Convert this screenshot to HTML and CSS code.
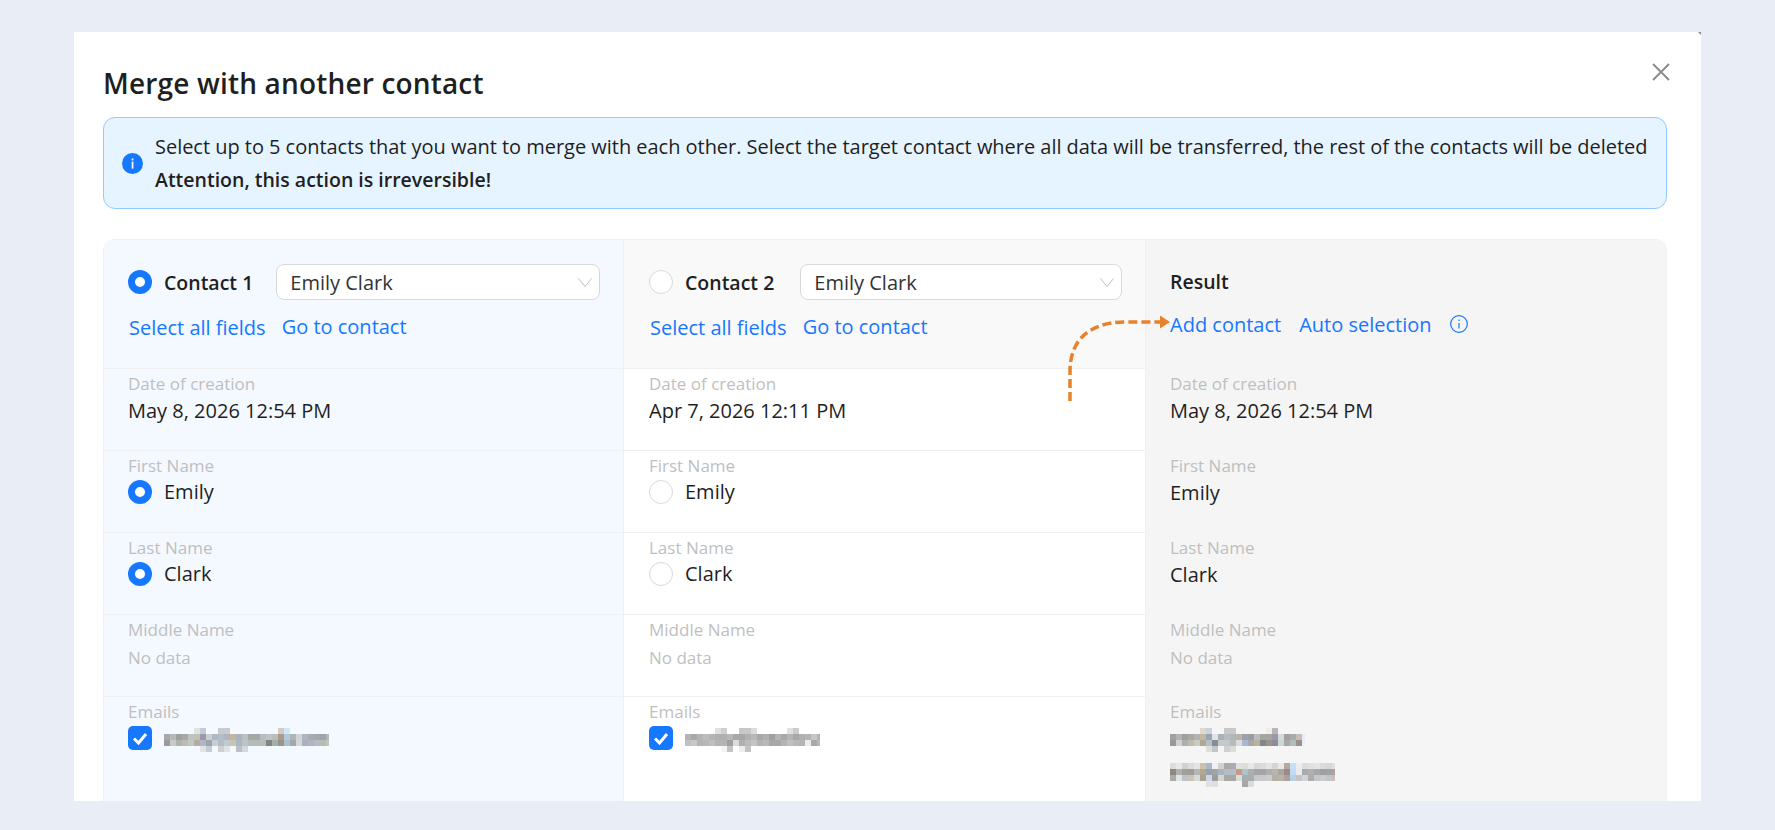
FILE: index.html
```html
<!DOCTYPE html>
<html lang="en">
<head>
<meta charset="utf-8">
<title>Merge with another contact</title>
<link rel="stylesheet" href="styles.css">
</head>
<body>
<div class="modal">
  <span class="notch"></span>
  <svg class="close" viewBox="0 0 18 18" width="18" height="18"><path d="M1 1 17 17M17 1 1 17"/></svg>
  <h1 class="title">Merge with another contact</h1>
  <div class="alert">
    <svg class="alert-icon" viewBox="0 0 21 21" width="21" height="21"><circle cx="10.5" cy="10.5" r="10.5"/><rect class="w" x="9.7" y="5.5" width="1.7" height="1.9"/><rect class="w" x="9.7" y="8.6" width="1.7" height="7"/></svg>
    <div class="alert-text">
      <div class="alert-line">Select up to 5 contacts that you want to merge with each other. Select the target contact where all data will be transferred, the rest of the contacts will be deleted</div>
      <div class="strong">Attention, this action is irreversible!</div>
    </div>
  </div>
  <div class="table">
    <section class="col col-one">
      <header class="head">
        <div class="head-top">
          <span class="radio on"></span><span class="contact-name">Contact 1</span>
          <span class="select"><span>Emily Clark</span><svg class="chev" viewBox="0 0 14 9" width="14" height="9"><path d="M.5.5 7 8.5 13.500.5"/></svg></span>
        </div>
        <div class="links"><a>Select all fields</a><a class="up">Go to contact</a></div>
      </header>
      <div class="row"><div class="label">Date of creation</div><div class="value">May 8, 2026 12:54 PM</div></div>
      <div class="row"><div class="label">First Name</div><div class="value pick"><span class="radio on"></span>Emily</div></div>
      <div class="row"><div class="label">Last Name</div><div class="value pick"><span class="radio on"></span>Clark</div></div>
      <div class="row"><div class="label">Middle Name</div><div class="value none">No data</div></div>
      <div class="row last"><div class="label">Emails</div><div class="value pick">
        <svg class="check" viewBox="0 0 24 24" width="24" height="24"><rect width="24" height="24" rx="5"/><path d="M6 12.500 10.500 17 18 8"/></svg>
        <svg class="px" viewBox="0 0 27.500 4" width="165" height="24">
          <rect x="5" y="0" fill="#dfe3e1"/><rect x="6" y="0" fill="#c3c9d6"/><rect x="9" y="0" fill="#c8ccd0"/><rect x="10" y="0" fill="#c8ccd0"/><rect x="19" y="0" fill="#d4ccc4"/><rect x="20" y="0" fill="#cfe8f5"/>
          <rect x="0" y="1" fill="#a8a8a8"/><rect x="1" y="1" fill="#b8b8b8"/><rect x="2" y="1" fill="#a0a0a0"/><rect x="3" y="1" fill="#a8a8a8"/><rect x="4" y="1" fill="#bcc4c4"/><rect x="5" y="1" fill="#c4c0b4"/><rect x="6" y="1" fill="#9a9aa8"/><rect x="7" y="1" fill="#c8d0d0"/><rect x="8" y="1" fill="#b0b8c4"/><rect x="9" y="1" fill="#b4bcc8"/><rect x="10" y="1" fill="#b0b4c4"/><rect x="11" y="1" fill="#c4b4a4"/><rect x="12" y="1" fill="#a8b4bc"/><rect x="13" y="1" fill="#b8c0c4"/><rect x="14" y="1" fill="#a4a8a4"/><rect x="15" y="1" fill="#a4a8a4"/><rect x="16" y="1" fill="#b4bcc4"/><rect x="17" y="1" fill="#bcc4c4"/><rect x="18" y="1" fill="#bcbcb8"/><rect x="19" y="1" fill="#a89c90"/><rect x="20" y="1" fill="#b4c8d8"/><rect x="21" y="1" fill="#b0b4b4"/><rect x="22" y="1" fill="#ccd4d8"/><rect x="23" y="1" fill="#b0b4bc"/><rect x="24" y="1" fill="#a8acb0"/><rect x="25" y="1" fill="#a4a8a8"/><rect x="26" y="1" fill="#9ca4ac"/><rect x="27" y="1" fill="#b4b8bc"/>
          <rect x="0" y="2" fill="#989c9c"/><rect x="1" y="2" fill="#c4ccc8"/><rect x="2" y="2" fill="#acb4b0"/><rect x="3" y="2" fill="#bcbcb0"/><rect x="4" y="2" fill="#c0c8c0"/><rect x="5" y="2" fill="#b4aca4"/><rect x="6" y="2" fill="#b0b8c4"/><rect x="7" y="2" fill="#a0a4b0"/><rect x="8" y="2" fill="#c8ccd4"/><rect x="9" y="2" fill="#b4bcc8"/><rect x="10" y="2" fill="#c0c8d0"/><rect x="11" y="2" fill="#c8c4b4"/><rect x="12" y="2" fill="#a8b8c4"/><rect x="13" y="2" fill="#bcc4c4"/><rect x="14" y="2" fill="#b4bcb8"/><rect x="15" y="2" fill="#b4bcb8"/><rect x="16" y="2" fill="#b8bcb8"/><rect x="17" y="2" fill="#808484"/><rect x="18" y="2" fill="#a4b0ac"/><rect x="19" y="2" fill="#9c9484"/><rect x="20" y="2" fill="#a8c0d0"/><rect x="21" y="2" fill="#a0a8b0"/><rect x="22" y="2" fill="#d0d8d8"/><rect x="23" y="2" fill="#acb0bc"/><rect x="24" y="2" fill="#b0b4c0"/><rect x="25" y="2" fill="#b4bcc4"/><rect x="26" y="2" fill="#b8bcb8"/><rect x="27" y="2" fill="#c4c4b8"/>
          <rect x="6" y="3" fill="#e0e4e4"/><rect x="7" y="3" fill="#c4ccd4"/><rect x="9" y="3" fill="#ccd0d4"/><rect x="10" y="3" fill="#dce4e4"/><rect x="12" y="3" fill="#bcc0c4"/><rect x="13" y="3" fill="#d4d8d8"/>
        </svg>
      </div></div>
    </section>
    <section class="col col-two">
      <header class="head">
        <div class="head-top">
          <span class="radio"></span><span class="contact-name">Contact 2</span>
          <span class="select"><span>Emily Clark</span><svg class="chev" viewBox="0 0 14 9" width="14" height="9"><path d="M.5.5 7 8.5 13.500.5"/></svg></span>
        </div>
        <div class="links"><a>Select all fields</a><a class="up">Go to contact</a></div>
      </header>
      <div class="row"><div class="label">Date of creation</div><div class="value">Apr 7, 2026 12:11 PM</div></div>
      <div class="row"><div class="label">First Name</div><div class="value pick"><span class="radio"></span>Emily</div></div>
      <div class="row"><div class="label">Last Name</div><div class="value pick"><span class="radio"></span>Clark</div></div>
      <div class="row"><div class="label">Middle Name</div><div class="value none">No data</div></div>
      <div class="row last"><div class="label">Emails</div><div class="value pick">
        <svg class="check" viewBox="0 0 24 24" width="24" height="24"><rect width="24" height="24" rx="5"/><path d="M6 12.500 10.500 17 18 8"/></svg>
        <svg class="px" viewBox="0 0 22.500 4" width="135" height="24">
          <rect x="5" y="0" fill="#e0e0e0"/><rect x="6" y="0" fill="#cfcfcf"/><rect x="9" y="0" fill="#c8c8c8"/><rect x="10" y="0" fill="#c8c8c8"/><rect x="11" y="0" fill="#dcdcdc"/><rect x="17" y="0" fill="#e0e0e0"/><rect x="18" y="0" fill="#cccccc"/>
          <rect x="0" y="1" fill="#b4b4b4"/><rect x="1" y="1" fill="#a8a8a8"/><rect x="2" y="1" fill="#b4b4b4"/><rect x="3" y="1" fill="#bcbcbc"/><rect x="4" y="1" fill="#b4b4b4"/><rect x="5" y="1" fill="#b0b0b0"/><rect x="6" y="1" fill="#b0b0b0"/><rect x="7" y="1" fill="#b8b8b8"/><rect x="8" y="1" fill="#a8a8a8"/><rect x="9" y="1" fill="#a8a8a8"/><rect x="10" y="1" fill="#b0b0b0"/><rect x="11" y="1" fill="#b8b8b8"/><rect x="12" y="1" fill="#a8a8a8"/><rect x="13" y="1" fill="#b0b0b0"/><rect x="14" y="1" fill="#a0a0a0"/><rect x="15" y="1" fill="#b4b4b4"/><rect x="16" y="1" fill="#a8a8a8"/><rect x="17" y="1" fill="#b4b4b4"/><rect x="18" y="1" fill="#a8a8a8"/><rect x="19" y="1" fill="#b0b0b0"/><rect x="20" y="1" fill="#b4b4b4"/><rect x="21" y="1" fill="#c8c8c8"/><rect x="22" y="1" fill="#b4b4b4"/>
          <rect x="0" y="2" fill="#c0c0c0"/><rect x="1" y="2" fill="#c8c8c8"/><rect x="2" y="2" fill="#b4b4b4"/><rect x="3" y="2" fill="#b8b8b8"/><rect x="4" y="2" fill="#c0c0c0"/><rect x="5" y="2" fill="#b4b4b4"/><rect x="6" y="2" fill="#b4b4b4"/><rect x="7" y="2" fill="#a0a0a0"/><rect x="8" y="2" fill="#dcdcdc"/><rect x="9" y="2" fill="#b0b0b0"/><rect x="10" y="2" fill="#bcbcbc"/><rect x="11" y="2" fill="#c4c4c4"/><rect x="12" y="2" fill="#b4b4b4"/><rect x="13" y="2" fill="#b8b8b8"/><rect x="14" y="2" fill="#a8a8a8"/><rect x="15" y="2" fill="#a8a8a8"/><rect x="16" y="2" fill="#b4b4b4"/><rect x="17" y="2" fill="#c0c0c0"/><rect x="18" y="2" fill="#b8b8b8"/><rect x="19" y="2" fill="#b4b4b4"/><rect x="20" y="2" fill="#ececec"/><rect x="21" y="2" fill="#a8a8a8"/><rect x="22" y="2" fill="#b8b8b8"/>
          <rect x="6" y="3" fill="#f4f4f4"/><rect x="7" y="3" fill="#c4c4c4"/><rect x="9" y="3" fill="#eeeeee"/><rect x="10" y="3" fill="#c4c4c4"/>
        </svg>
      </div></div>
    </section>
    <section class="col col-result">
      <header class="head">
        <div class="result-title">Result</div>
        <div class="links result-links"><a>Add contact</a><a>Auto selection</a><svg class="hint" viewBox="0 0 18 18" width="18" height="18"><circle cx="9" cy="9" r="8.300"/><path d="M9 8v5.500M9 4.500v1.500"/></svg></div>
      </header>
      <div class="row"><div class="label">Date of creation</div><div class="value">May 8, 2026 12:54 PM</div></div>
      <div class="row"><div class="label">First Name</div><div class="value">Emily</div></div>
      <div class="row"><div class="label">Last Name</div><div class="value">Clark</div></div>
      <div class="row"><div class="label">Middle Name</div><div class="value none">No data</div></div>
      <div class="row last"><div class="label">Emails</div>
        <svg class="px stack" viewBox="0 0 22.500 4" width="135" height="24">
          <rect x="5" y="0" fill="#e0d8cc"/><rect x="6" y="0" fill="#c8d4e0"/><rect x="9" y="0" fill="#c8c8c8"/><rect x="10" y="0" fill="#c8c8c8"/><rect x="16" y="0" fill="#f0ecec"/><rect x="17" y="0" fill="#b8b4bc"/>
          <rect x="0" y="1" fill="#a4a09c"/><rect x="1" y="1" fill="#b0b4b8"/><rect x="2" y="1" fill="#a0a09c"/><rect x="3" y="1" fill="#a8a8a4"/><rect x="4" y="1" fill="#b0b4b4"/><rect x="5" y="1" fill="#c4b8a4"/><rect x="6" y="1" fill="#98a4b0"/><rect x="7" y="1" fill="#e0e4e8"/><rect x="8" y="1" fill="#a8b0b8"/><rect x="9" y="1" fill="#b8bcc0"/><rect x="10" y="1" fill="#b0b8bc"/><rect x="11" y="1" fill="#bcb4a8"/><rect x="12" y="1" fill="#a0a0b0"/><rect x="13" y="1" fill="#989ca4"/><rect x="14" y="1" fill="#b8bcbc"/><rect x="15" y="1" fill="#a8a4a0"/><rect x="16" y="1" fill="#a8a4a0"/><rect x="17" y="1" fill="#9c98a8"/><rect x="18" y="1" fill="#d4d8dc"/><rect x="19" y="1" fill="#a4a09c"/><rect x="20" y="1" fill="#a4acac"/><rect x="21" y="1" fill="#c8bcb4"/><rect x="22" y="1" fill="#e8ecf0"/>
          <rect x="0" y="2" fill="#989898"/><rect x="1" y="2" fill="#d0d2d2"/><rect x="2" y="2" fill="#acb0b4"/><rect x="3" y="2" fill="#c0bcac"/><rect x="4" y="2" fill="#c4ccc4"/><rect x="5" y="2" fill="#b0a890"/><rect x="6" y="2" fill="#b4c0cc"/><rect x="7" y="2" fill="#888c94"/><rect x="8" y="2" fill="#c8c8c8"/><rect x="9" y="2" fill="#c4c8c8"/><rect x="10" y="2" fill="#b4bcc0"/><rect x="11" y="2" fill="#dcdcdc"/><rect x="12" y="2" fill="#a8b8d0"/><rect x="13" y="2" fill="#a8a8a8"/><rect x="14" y="2" fill="#bcb0a0"/><rect x="15" y="2" fill="#808888"/><rect x="16" y="2" fill="#989490"/><rect x="17" y="2" fill="#8c8c9c"/><rect x="18" y="2" fill="#ccd8d8"/><rect x="19" y="2" fill="#a8a8a8"/><rect x="20" y="2" fill="#b4bcb8"/><rect x="21" y="2" fill="#989090"/><rect x="22" y="2" fill="#ecf0f4"/>
          <rect x="6" y="3" fill="#e0dcd8"/><rect x="7" y="3" fill="#c0c8cc"/><rect x="9" y="3" fill="#d0d0d0"/><rect x="10" y="3" fill="#dcdcd8"/>
        </svg>
        <svg class="px stack second" viewBox="0 0 27.500 4" width="165" height="24">
          <rect x="0" y="0" fill="#e0dcd8"/><rect x="1" y="0" fill="#e8e8e8"/><rect x="2" y="0" fill="#d4d0cc"/><rect x="3" y="0" fill="#dcdcdc"/><rect x="4" y="0" fill="#e4e4e4"/><rect x="5" y="0" fill="#d0c0a8"/><rect x="6" y="0" fill="#a8b8c8"/><rect x="7" y="0" fill="#f0f0f0"/><rect x="8" y="0" fill="#d4d0cc"/><rect x="9" y="0" fill="#aca8a4"/><rect x="10" y="0" fill="#a8acb4"/><rect x="11" y="0" fill="#e0e0e0"/><rect x="12" y="0" fill="#dcdcd8"/><rect x="13" y="0" fill="#e8e8e8"/><rect x="14" y="0" fill="#d8d8d8"/><rect x="15" y="0" fill="#dcdcdc"/><rect x="16" y="0" fill="#e4e4e8"/><rect x="17" y="0" fill="#d8d4d0"/><rect x="18" y="0" fill="#ece8e8"/><rect x="19" y="0" fill="#b8a8a0"/><rect x="20" y="0" fill="#c4e0f4"/><rect x="21" y="0" fill="#f0ecec"/><rect x="22" y="0" fill="#dcdcdc"/><rect x="23" y="0" fill="#e4e0dc"/><rect x="24" y="0" fill="#e4e4e8"/><rect x="25" y="0" fill="#dcdcd8"/><rect x="26" y="0" fill="#d8d8d8"/><rect x="27" y="0" fill="#dce0e4"/>
          <rect x="0" y="1" fill="#8c8884"/><rect x="1" y="1" fill="#b0b0b0"/><rect x="2" y="1" fill="#a0a09c"/><rect x="3" y="1" fill="#a09c98"/><rect x="4" y="1" fill="#b4b8b4"/><rect x="5" y="1" fill="#b0a890"/><rect x="6" y="1" fill="#98a0ac"/><rect x="7" y="1" fill="#a0a4a8"/><rect x="8" y="1" fill="#a8b4c0"/><rect x="9" y="1" fill="#b4bcc4"/><rect x="10" y="1" fill="#b4bcc4"/><rect x="11" y="1" fill="#c49c84"/><rect x="12" y="1" fill="#b0c0cc"/><rect x="13" y="1" fill="#acb0b0"/><rect x="14" y="1" fill="#a4a4ac"/><rect x="15" y="1" fill="#a4a4a8"/><rect x="16" y="1" fill="#b0b0b0"/><rect x="17" y="1" fill="#b8b4ac"/><rect x="18" y="1" fill="#a8a89c"/><rect x="19" y="1" fill="#a08888"/><rect x="20" y="1" fill="#c0dcf4"/><rect x="21" y="1" fill="#eceae8"/><rect x="22" y="1" fill="#a8a8b8"/><rect x="23" y="1" fill="#b0b0b0"/><rect x="24" y="1" fill="#a8a8a8"/><rect x="25" y="1" fill="#a0a0a0"/><rect x="26" y="1" fill="#a0a4a8"/><rect x="27" y="1" fill="#b0a0a0"/>
          <rect x="0" y="2" fill="#acaaa6"/><rect x="1" y="2" fill="#e0e4e4"/><rect x="2" y="2" fill="#bcc4c8"/><rect x="3" y="2" fill="#ccc4b8"/><rect x="4" y="2" fill="#d4dcd4"/><rect x="5" y="2" fill="#a8a090"/><rect x="6" y="2" fill="#ccd8e4"/><rect x="7" y="2" fill="#9c9c9c"/><rect x="8" y="2" fill="#d8d4d0"/><rect x="9" y="2" fill="#a8a8a4"/><rect x="10" y="2" fill="#a8a8a8"/><rect x="11" y="2" fill="#dcdcdc"/><rect x="12" y="2" fill="#a8acac"/><rect x="13" y="2" fill="#a8acac"/><rect x="14" y="2" fill="#c8c8c8"/><rect x="15" y="2" fill="#c8c8c8"/><rect x="16" y="2" fill="#cccccc"/><rect x="17" y="2" fill="#b0b0ac"/><rect x="18" y="2" fill="#b4b4a8"/><rect x="19" y="2" fill="#aca0a0"/><rect x="20" y="2" fill="#b8d0e4"/><rect x="21" y="2" fill="#c8c4c4"/><rect x="22" y="2" fill="#d0d4d8"/><rect x="23" y="2" fill="#b0aca8"/><rect x="24" y="2" fill="#c4c8cc"/><rect x="25" y="2" fill="#c8ccd0"/><rect x="26" y="2" fill="#c4c4c8"/><rect x="27" y="2" fill="#ccbcbc"/>
          <rect x="6" y="3" fill="#e4e0dc"/><rect x="7" y="3" fill="#d8e0e8"/><rect x="12" y="3" fill="#a8a8a8"/><rect x="13" y="3" fill="#d8dce0"/>
        </svg>
      </div>
    </section>
    <svg class="arrow" viewBox="0 0 120 90" width="120" height="90"><path class="dash" d="M10 82V52C10 25 25 3 66 3H100"/><path class="tip" d="M100 -3.500 110 3 100 9.500Z"/></svg>
  </div>
</div>
</body>
</html>
```

FILE: styles.css
```css
* { box-sizing: border-box; }
html, body { margin: 0; height: 830px; overflow: hidden; }
body {
  background: #e9eef6;
  padding: 32px 74px 29px 74px;
  font-family: "Open Sans", "Noto Sans", sans-serif;
  font-size: 20px;
  color: #1f1f1f;
}
.modal {
  position: relative;
  height: 769px;
  background: #fff;
  padding: 29px 34px 0 29px;
  display: flex;
  flex-direction: column;
  overflow: hidden;
}
.notch {
  position: absolute;
  top: 0;
  right: 0;
  border-top: 3px solid #8c8c8c;
  border-left: 3px solid transparent;
}
.close { position: absolute; top: 31px; right: 31px; }
.close path { stroke: #8c8c8c; stroke-width: 2; fill: none; }
.title {
  margin: 0;
  font-size: 28px;
  letter-spacing: .17px;
  line-height: 44px;
  font-weight: 600;
  color: #1f1f1f;
}
.alert {
  margin-top: 12px;
  height: 92px;
  flex: none;
  display: flex;
  align-items: center;
  gap: 12px;
  padding: 0 18px;
  background: #e6f4ff;
  border: 1px solid #91caff;
  border-radius: 12px;
}
.alert-icon { flex: none; }
.alert-icon circle { fill: #1677ff; }
.alert-icon .w { fill: #fff; }
.alert-text { line-height: 33px; white-space: nowrap; }
.alert-line { letter-spacing: -.03px; }
.strong { font-weight: 600; font-size: 19.500px; }
.table {
  position: relative;
  margin-top: 30px;
  flex: 1;
  display: grid;
  grid-template-columns: 521px 522px 521px;
  border-radius: 12px 12px 0 0;
  overflow: hidden;
  box-shadow: inset 0 0 0 1px #f0f0f0;
}
.col { display: flex; flex-direction: column; border-right: 1px solid #f0f0f0; }
.col-one { background: #f3f9ff; border-left: 1px solid #f0f0f0; }
.col-two { background: #fff; }
.col-two .head { background: #f9f9f9; }
.col-result { background: #f5f5f5; border-right: 0; }
.head {
  height: 129px;
  flex: none;
  padding: 24px 23px 0 24px;
  border-top: 1px solid #f0f0f0;
}
.col-two .head { padding-left: 25px; }
.col-result .head { padding-left: 24px; }
.head-top { display: flex; align-items: center; height: 36px; }
.radio {
  flex: none;
  display: inline-block;
  width: 24px;
  height: 24px;
  border-radius: 50%;
  background: #fff;
  border: 1px solid #d9d9d9;
}
.radio.on { border: 7px solid #1677ff; }
.contact-name { margin: 0 23px 0 12px; font-size: 19.500px; font-weight: 600; white-space: nowrap; flex: none; }
.col-two .contact-name { margin-right: 26px; }
.select {
  flex: 1;
  height: 36px;
  display: flex;
  align-items: center;
  justify-content: space-between;
  padding: 0 7px 0 13px;
  background: #fff;
  border: 1px solid #d9d9d9;
  border-radius: 8px;
  color: #333;
}
.chev path { stroke: #bfbfbf; stroke-width: 1; fill: none; }
.links { display: flex; gap: 16px; margin: 14px 0 0 1px; line-height: 27px; color: #1677ff; white-space: nowrap; }
.links .up { position: relative; top: -1px; }
.result-title { font-size: 19.500px; font-weight: 600; line-height: 27px; margin-top: 4px; }
.result-links { margin: 16px 0 0; gap: 18px; align-items: center; }
.hint { margin-left: 0; margin-top: -2px; }
.hint circle, .hint path { fill: none; stroke: #1677ff; stroke-width: 1.200; }
.row {
  height: 82px;
  flex: none;
  padding: 3px 0 0 25px;
  border-top: 1px solid #f0f0f0;
}
.col-one .row { padding-left: 24px; }
.col-result .row { border-top: 0; padding-left: 24px; padding-top: 4px; }
.row.last { flex: 1; height: auto; }
.label { font-size: 17px; line-height: 24px; color: #bfbfbf; white-space: nowrap; }
.value { line-height: 24px; margin-top: 3px; color: #1f1f1f; white-space: nowrap; }
.value.pick { display: flex; align-items: center; gap: 12px; margin-top: 2px; }
.value.none { color: #bfbfbf; font-size: 17px; margin-top: 4px; }
.check rect { fill: #1677ff; }
.check path { stroke: #fff; stroke-width: 3; fill: none; }
.px { flex: none; display: block; shape-rendering: crispEdges; }
.value .px { position: relative; top: 2px; }
.px rect { width: 1px; height: 1px; }
.stack { margin-top: 4px; }
.stack.second { margin-top: 11px; }
.arrow { position: absolute; left: 957px; top: 80px; overflow: visible; pointer-events: none; }
.dash { fill: none; stroke: #e8822a; stroke-width: 3.500; stroke-dasharray: 9 4; }
.tip { fill: #e8822a; }
```
